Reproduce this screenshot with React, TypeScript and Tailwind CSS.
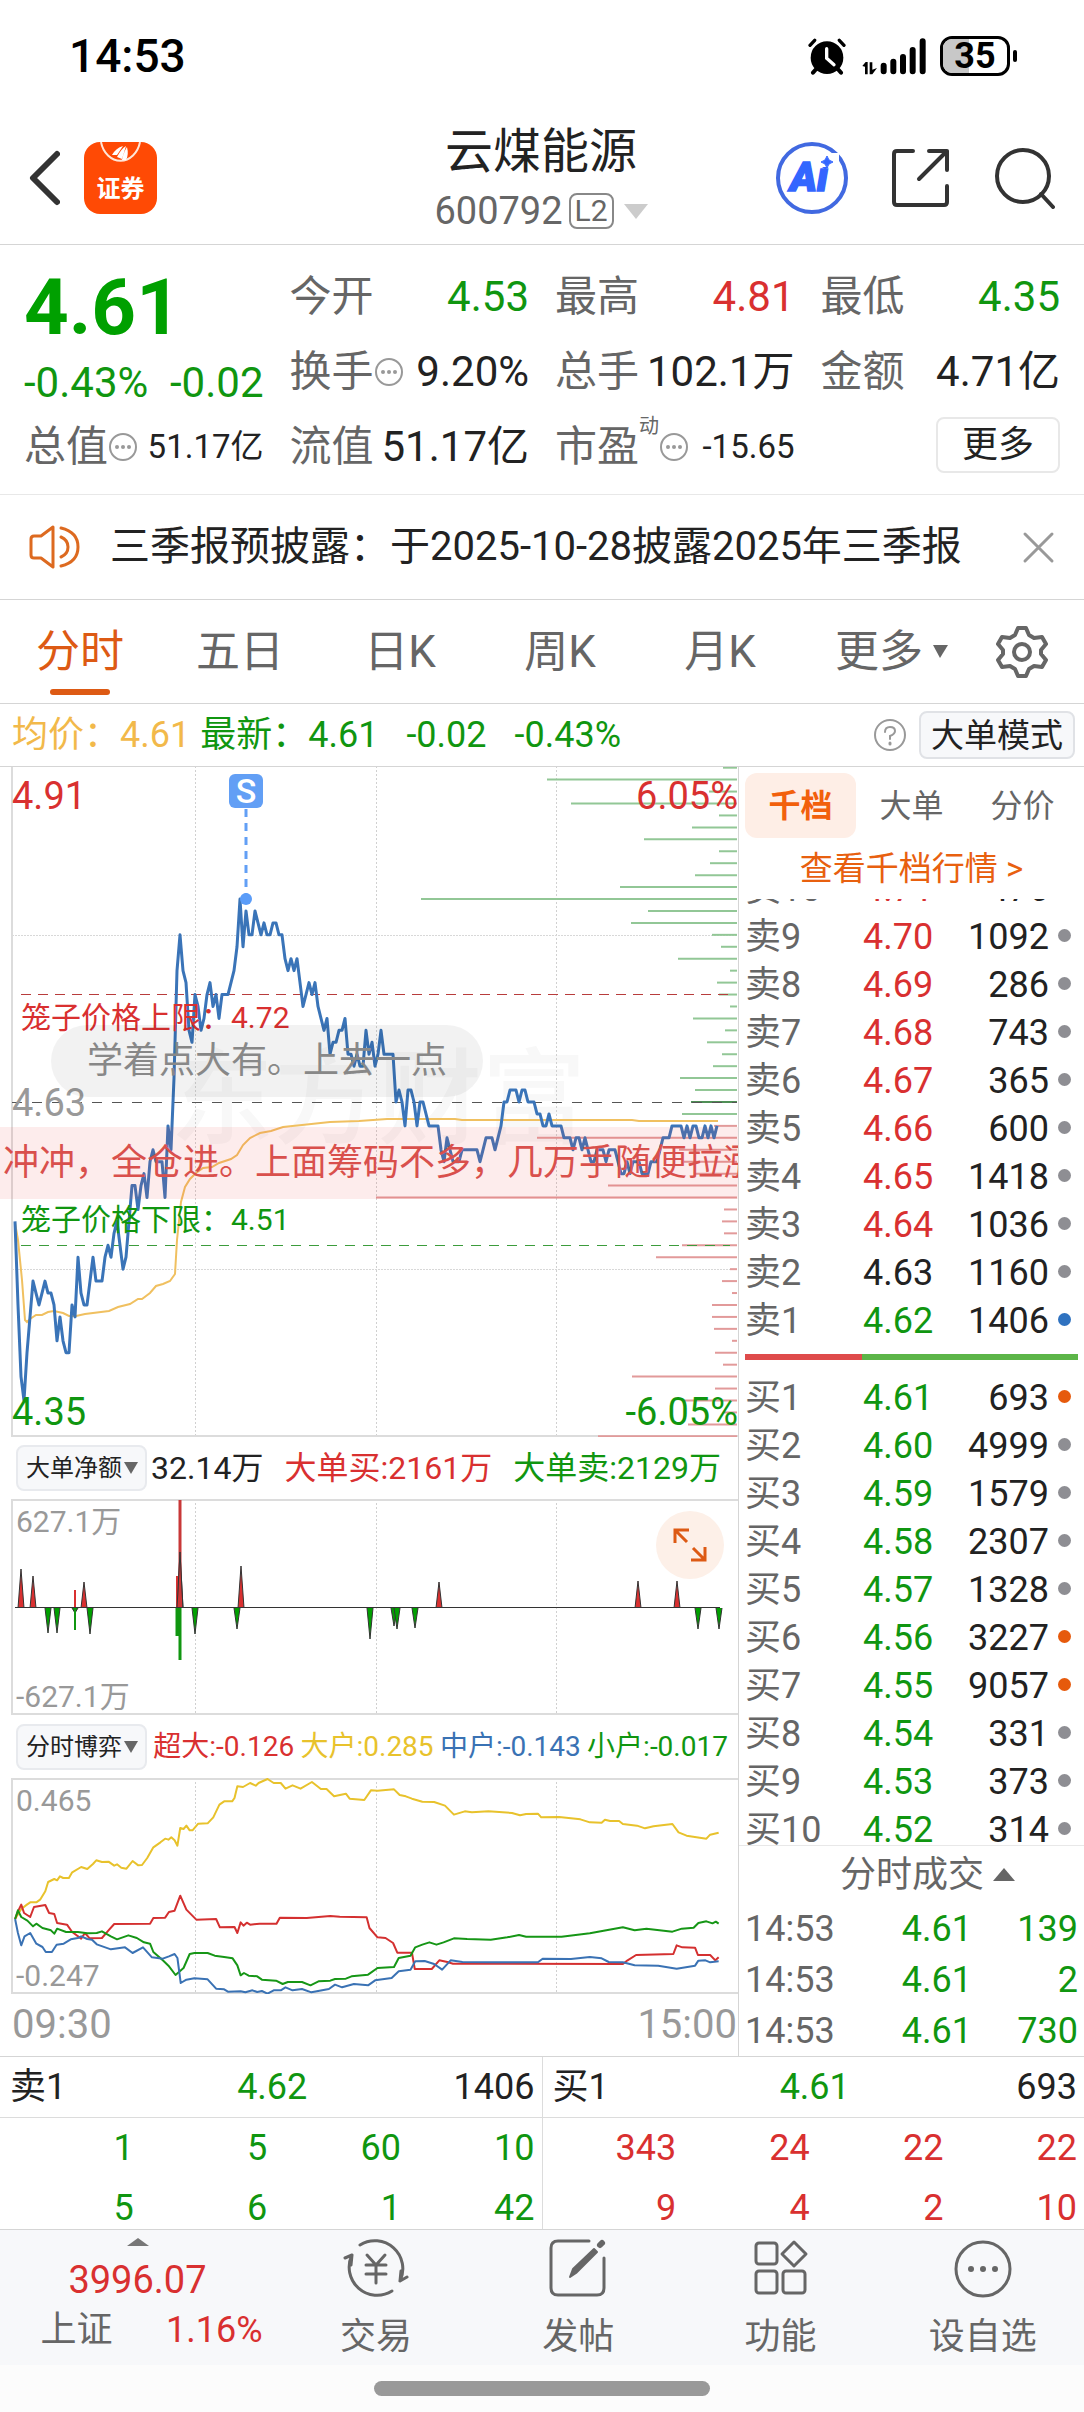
import { ReactNode } from "react";

// last price per minute, in cents
const prices = [
  453, 446, 440, 438, 442, 445, 448, 447, 446, 447, 448, 447, 447, 446, 443, 445, 443, 442, 442, 446,
  445, 450, 447, 446, 446, 448, 450, 448, 448, 448, 450, 451, 450, 452, 453, 451, 449, 450, 453, 456,
  456, 454, 456, 457, 455, 458, 459, 458, 458, 458, 455, 461, 459, 465, 474, 477, 474, 473, 469, 468,
  472, 471, 469, 470, 472, 473, 471, 472, 470, 472, 472, 472, 473, 474, 476, 480, 476, 479, 477, 477,
  479, 478, 477, 478, 477, 477, 478, 478, 477, 477, 475, 474, 475, 474, 475, 473, 471, 472, 473, 472,
  473, 471, 470, 469, 470, 467, 468, 468, 469, 469, 470, 467, 467, 466, 467, 466, 466, 469, 467, 468,
  466, 467, 469, 467, 467, 467, 467, 463, 464, 463, 461, 464, 464, 463, 461, 463, 463, 462, 461, 461,
  461, 461, 459, 458, 460, 459, 458, 458, 458, 459, 459, 459, 459, 459, 459, 458, 459, 460, 460, 460,
  459, 460, 461, 463, 463, 464, 464, 464, 463, 464, 464, 463, 463, 463, 462, 462, 461, 461, 462, 461,
  461, 461, 461, 460, 460, 460, 459, 460, 460, 459, 460, 459, 458, 458, 459, 459, 459, 458, 459, 459,
  459, 458, 457, 457, 458, 457, 458, 458, 458, 457, 457, 457, 458, 458, 458, 459, 460, 460, 460, 461,
  461, 461, 461, 460, 461, 460, 461, 461, 460, 460, 461, 460, 461, 460, 461,
];

const avgLine =
  "15,457 18,474 22,514 25,554 27,556 30,553 36,549 42,549 48,546 54,545 63,547 69,550 76,550 85,548 101,546 109,545 118,541 130,538 138,533 142,533 150,527 156,520 163,518 170,515 175,508 177,474 181,436 185,421 190,413 196,407 203,402 212,401 219,397 231,393 237,389 243,379 250,372 260,367 271,365 283,361 302,359 330,356 359,355 387,353 455,353 462,354 632,354 639,355 718,355";

// resting volume per price level, from 4.91 down to 4.35
const askBars = [14, 190, 28, 166, 18, 45, 93, 18, 27, 42, 117, 316, 89, 106, 25, 16, 59, 7, 20, 18, 7, 44, 12, 30, 15, 24, 57, 42, 46, 55];
const bidBars = [23, 200, 58, 53, 43, 129, 361, 13, 15, 13, 55, 81, 7, 15, 5, 25, 25, 23, 5, 22, 14, 105, 22, 53, 13, 49, 139];

const priceY = (cents: number) => 336 - (cents - 463) * 11.94;

const buySpikes = [[21, 70], [33, 77], [84, 83], [180, 53], [241, 67], [439, 83], [638, 82], [677, 82]];
const sellSpikes = [[48, 134], [57, 134], [75, 114], [90, 135], [195, 135], [237, 130], [370, 140], [394, 127], [397, 130], [415, 129], [698, 130], [719, 130]];

const gameLines = [
  {
    color: "#e8c22c",
    points:
      "32,598 45,568 57,555 64,548 77,548 85,540 96,515 102,487 115,478 121,482 127,470 134,475 146,475 153,458 172,442 185,448 197,433 204,422 216,427 230,426 242,438 248,434 257,444 268,447 281,424 293,437 301,436 312,415 325,383 340,368 350,357 357,360 363,353 370,362 376,378 382,325 389,328 395,318 402,332 408,332 420,312 440,311 452,293 465,255 475,245 492,245 497,235 503,200 515,202 530,190 542,198 548,190 567,178 580,190 595,190 605,207 620,197 637,207 661,187 680,208 692,208 708,230 733,222 741,237 772,241 786,212 800,213 835,209 847,226 860,230 873,237 895,246 920,247 943,258 962,285 985,275 1000,278 1035,275 1085,280 1102,287 1115,283 1140,282 1147,293 1185,292 1230,299 1250,308 1275,309 1282,300 1293,304 1312,304 1320,313 1350,318 1367,326 1385,320 1425,313 1438,338 1455,348 1497,357 1505,345 1523,339",
  },
  {
    color: "#d43030",
    points:
      "32,598 38,575 45,555 51,580 64,592 72,562 96,556 104,580 115,583 121,610 142,615 153,637 172,657 180,640 190,656 216,655 230,632 242,613 318,612 325,595 350,594 358,577 370,573 382,528 395,570 416,600 458,598 466,623 497,622 503,640 510,608 516,618 523,609 530,615 550,612 586,612 593,594 650,595 700,589 720,591 777,593 783,625 800,653 817,655 833,670 842,699 873,699 879,748 915,748 931,722 948,727 960,732 1320,733 1330,722 1348,706 1427,703 1434,677 1446,683 1473,684 1479,706 1505,706 1516,722 1523,713",
  },
  {
    color: "#169616",
    points:
      "32,598 38,572 45,592 58,603 70,620 77,612 90,625 108,632 115,642 121,627 140,637 165,637 185,641 205,640 216,635 235,650 248,659 272,647 290,655 305,668 318,672 325,697 345,722 357,738 372,766 389,745 402,703 412,700 440,700 455,708 475,712 493,716 503,737 510,767 517,760 527,768 545,770 555,780 585,783 599,793 610,787 640,787 658,797 675,785 700,783 710,778 733,777 745,770 780,765 800,745 835,742 845,715 870,708 880,683 895,675 910,668 925,675 940,668 962,656 990,658 1040,660 1075,653 1100,646 1115,651 1190,651 1250,641 1320,623 1345,632 1370,627 1425,636 1445,627 1470,624 1480,610 1497,605 1510,611 1517,606 1523,612",
  },
  {
    color: "#3a72b4",
    points:
      "32,598 38,640 45,677 52,650 64,640 77,672 90,682 97,697 110,697 120,675 135,672 150,659 165,655 172,650 185,658 195,660 205,674 235,689 265,683 281,700 303,683 322,713 345,717 358,710 370,703 376,715 383,790 395,780 412,776 440,779 458,807 475,809 483,816 510,815 520,818 535,812 545,817 555,814 567,822 580,812 595,812 605,803 620,812 640,808 660,818 697,808 710,795 725,803 750,793 780,797 795,782 830,775 845,755 870,750 880,725 900,724 920,733 937,750 955,722 980,727 1050,728 1140,728 1150,717 1210,718 1250,712 1275,716 1290,727 1320,728 1345,737 1395,738 1434,747 1473,738 1480,723 1495,722 1505,728 1523,725",
  },
];

const asks = [
  ["卖10", "4.71", "476"],
  ["卖9", "4.70", "1092"],
  ["卖8", "4.69", "286"],
  ["卖7", "4.68", "743"],
  ["卖6", "4.67", "365"],
  ["卖5", "4.66", "600"],
  ["卖4", "4.65", "1418"],
  ["卖3", "4.64", "1036"],
  ["卖2", "4.63", "1160"],
  ["卖1", "4.62", "1406"],
];

const bids = [
  ["买1", "4.61", "693"],
  ["买2", "4.60", "4999"],
  ["买3", "4.59", "1579"],
  ["买4", "4.58", "2307"],
  ["买5", "4.57", "1328"],
  ["买6", "4.56", "3227"],
  ["买7", "4.55", "9057"],
  ["买8", "4.54", "331"],
  ["买9", "4.53", "373"],
  ["买10", "4.52", "314"],
];

const trades = ["139", "2", "730"];

const priceColor = (p: string) =>
  p > "4.63" ? "text-[#d93030]" : p < "4.63" ? "text-[#109610]" : "text-[#222]";

const dotColor = (label: string) => {
  if (label === "卖1") return "bg-[#2f72c0]";
  if (["买1", "买6", "买7"].includes(label)) return "bg-[#e65a0c]";
  return "bg-[#8e8e93]";
};

const StatusBar = () => (
  <div className="flex h-28 items-center justify-between pl-[69px] pr-[67px] text-black">
    <span className="text-[46px] font-medium leading-none">14:53</span>
    <div className="flex items-center">
      <svg width="119" height="37" viewBox="110 38 357 111" aria-hidden="true">
        <circle cx="167" cy="97" r="49" />
        <g stroke="#000" strokeWidth="10" strokeLinecap="round" fill="none">
          <path d="M116 60 L130 45 M218 60 L204 45" />
          <path d="M140 125 L125 142 M194 125 L209 142" strokeWidth="12" />
          <path d="M166 70 V99 L188 118" stroke="#fff" />
        </g>
        <path d="M273 122 L283 110 H289 V147 H281 V124 Z M295 111 H303 V133 L317 128 L303 147 H295 Z" />
        <g stroke="#000" strokeWidth="18" strokeLinecap="round">
          <path d="M337 121 V138 M366 109 V138 M395 95 V138 M424 74 V138 M454 48 V138" />
        </g>
      </svg>
      <div className="relative ml-[13px] flex h-10 w-[70px] items-center justify-center overflow-hidden rounded-xl border-[3px] border-black">
        <div className="absolute inset-y-0 left-0 w-[26px] bg-[#c8c8c8]" />
        <span className="relative text-[36px] font-bold leading-none">35</span>
      </div>
      <div className="ml-[3px] h-3 w-1 rounded-full bg-black" />
    </div>
  </div>
);

const Header = () => (
  <header className="flex h-[133px] items-center justify-between border-b border-[#d5d5d5] pl-[27px] pr-[29px] text-[#333]">
    <div className="flex flex-1 items-center gap-6">
      <button aria-label="返回">
        <svg width="33" height="56" viewBox="0 0 33 56" fill="none" stroke="#333" strokeWidth="6" strokeLinecap="round" strokeLinejoin="round">
          <path d="M30 4 L6 28 L30 52" />
        </svg>
      </button>
      <button className="relative flex h-[72px] w-[73px] items-end justify-center overflow-hidden rounded-2xl bg-[#ff4a05] pb-[13px]" aria-label="证券">
        <svg className="absolute left-0 top-0" width="73" height="72" viewBox="0 0 73 72" fill="none" aria-hidden="true">
          <path d="M17 0 A 20 24 0 0 0 56 0" stroke="#ffe6d8" strokeWidth="2" />
          <path d="M28 13 Q32 6 39 4 L33 13 Z M33 15 Q37 7 42 4 L38 17 Z M38 18 Q40 9 43 5 Q45 13 42 18 Z" fill="#fff" />
        </svg>
        <span className="text-2xl font-bold leading-none text-white">证券</span>
      </button>
    </div>
    <div className="flex flex-col items-center gap-[14px]">
      <h1 className="text-[48px] leading-[52px] text-[#222]">云煤能源</h1>
      <button className="flex items-center gap-[6px] text-[38px] leading-[38px] text-[#666]">
        600792
        <span className="rounded-lg border-2 border-[#888] px-1 text-[30px] leading-8">L2</span>
        <svg className="ml-1" width="24" height="15" viewBox="0 0 24 15" fill="#ccc" aria-hidden="true">
          <path d="M0 0 H24 L12 15 Z" />
        </svg>
      </button>
    </div>
    <div className="flex flex-1 items-center justify-end gap-[42px]">
      <button aria-label="AI 助手">
        <svg width="74" height="74" viewBox="0 0 74 74">
          <circle cx="37" cy="37" r="34" fill="none" stroke="#4169e1" strokeWidth="4" />
          <text x="15" y="50" fontSize="41" fontWeight="900" fill="#3366ff" stroke="#3366ff" strokeWidth="1.5" fontStyle="italic">Ai</text>
          <rect x="44" y="12" width="20" height="14" fill="#fff" />
          <path d="M52 15 Q53 20 58 21 Q53 22 52 27 Q51 22 46 21 Q51 20 52 15 Z" fill="#3366ff" stroke="#3366ff" />
        </svg>
      </button>
      <button aria-label="分享">
        <svg width="60" height="60" viewBox="0 0 60 60" fill="none" stroke="#333" strokeWidth="4" strokeLinecap="round" strokeLinejoin="round">
          <path d="M22 3 H6 Q3 3 3 6 V54 Q3 57 6 57 H53 Q56 57 56 54 V38" />
          <path d="M38 3 H56 V22 M56 3 L28 31" />
        </svg>
      </button>
      <button aria-label="搜索">
        <svg width="62" height="62" viewBox="0 0 62 62" fill="none" stroke="#333" strokeWidth="4" strokeLinecap="round">
          <circle cx="30" cy="29" r="26" />
          <path d="M48 47 L60 60" />
        </svg>
      </button>
    </div>
  </header>
);

const InfoDots = () => (
  <svg width="30" height="30" viewBox="0 0 30 30" aria-hidden="true">
    <circle cx="15" cy="15" r="13" fill="none" stroke="#999" strokeWidth="2" />
    <g fill="#999">
      <circle cx="9" cy="15" r="2" />
      <circle cx="15" cy="15" r="2" />
      <circle cx="21" cy="15" r="2" />
    </g>
  </svg>
);

const Stat = ({ label, value, color = "text-[#222]", info, size = "text-[42px]" }: {
  label: ReactNode;
  value: string;
  color?: string;
  info?: boolean;
  size?: string;
}) => (
  <div className="flex h-[75px] items-center justify-between whitespace-nowrap leading-none">
    <span className="flex items-center text-[42px] text-[#666]">
      {label}
      {info && <InfoDots />}
    </span>
    <span className={`${size} ${color}`}>{value}</span>
  </div>
);

const Quote = () => (
  <section className="grid h-[250px] grid-cols-4 gap-x-[26px] border-b border-[#e8e8e8] px-6 pt-[14px]">
    <div>
      <p className="flex h-[98px] items-center text-[78px] font-bold leading-none text-[#00a000]">4.61</p>
      <p className="flex h-[52px] items-center justify-between text-[42px] leading-none text-[#109610]">
        <span>-0.43%</span>
        <span>-0.02</span>
      </p>
      <Stat label="总值" value="51.17亿" info size="text-[33px]" />
    </div>
    <div>
      <Stat label="今开" value="4.53" color="text-[#109610]" />
      <Stat label="换手" value="9.20%" info />
      <Stat label="流值" value="51.17亿" />
    </div>
    <div>
      <Stat label="最高" value="4.81" color="text-[#d93030]" />
      <Stat label="总手" value="102.1万" />
      <Stat
        label={<>市盈<sup className="self-start text-xl leading-none">动</sup></>}
        value="-15.65"
        info
        size="text-[33px]"
      />
    </div>
    <div>
      <Stat label="最低" value="4.35" color="text-[#109610]" />
      <Stat label="金额" value="4.71亿" />
      <div className="flex h-[72px] items-center justify-end">
        <button className="h-14 w-[124px] rounded-lg border-2 border-[#e8e8e8] text-[36px] leading-none text-[#222]">更多</button>
      </div>
    </div>
  </section>
);

const Notice = () => (
  <section className="flex h-[105px] items-center border-b border-[#d5d5d5] pl-[29px] pr-[29px]">
    <svg width="52" height="44" viewBox="0 0 52 44" fill="none" stroke="#dd6a20" strokeWidth="3" strokeLinecap="round" strokeLinejoin="round" aria-hidden="true">
      <path d="M24 2 L12 11 H5 Q2 11 2 14 V30 Q2 33 5 33 H12 L24 42 Z" />
      <path d="M32 12 Q39 15 39 22 Q39 29 32 32" />
      <path d="M32 3 Q49 7 49 22 Q49 37 32 41" />
    </svg>
    <p className="ml-[29px] flex-1 whitespace-nowrap text-[40px] leading-none text-[#222]">三季报预披露：于2025-10-28披露2025年三季报</p>
    <button aria-label="关闭">
      <svg width="33" height="33" viewBox="0 0 33 33" stroke="#999" strokeWidth="3" strokeLinecap="round">
        <path d="M3 3 L30 30 M30 3 L3 30" />
      </svg>
    </button>
  </section>
);

const Tabs = () => (
  <nav className="flex h-[104px] items-center border-b border-[#d5d5d5] text-[44px] leading-none text-[#666]">
    <div className="grid h-full flex-1 grid-cols-6">
      <button className="relative flex items-center justify-center text-[#dd5a14]">
        分时
        <span className="absolute bottom-2 h-[6px] w-[60px] rounded-full bg-[#dd5a14]" />
      </button>
      <button>五日</button>
      <button>日K</button>
      <button>周K</button>
      <button>月K</button>
      <button className="flex items-center justify-end gap-[10px] pr-3">
        更多
        <svg width="15" height="13" viewBox="0 0 15 13" fill="#666" aria-hidden="true">
          <path d="M0 0 H15 L7 13 Z" />
        </svg>
      </button>
    </div>
    <button className="flex w-[124px] justify-center" aria-label="设置">
      <svg width="52" height="52" viewBox="0 0 52 52" fill="none" stroke="#666" strokeWidth="4" strokeLinejoin="round">
        <path d="M22 2 H30 L33 9 L38 12 L46 11 L50 18 L45 24 V28 L50 34 L46 41 L38 40 L33 43 L30 50 H22 L19 43 L14 40 L6 41 L2 34 L7 28 V24 L2 18 L6 11 L14 12 L19 9 Z" />
        <circle cx="26" cy="26" r="8" />
      </svg>
    </button>
  </nav>
);

const SummaryRow = () => (
  <div className="flex h-[63px] items-center justify-between border-b border-[#d5d5d5] pl-3 pr-[9px] leading-none">
    <div className="flex items-center text-[36px] text-[#109610]">
      <span className="text-[#f2b94a]">均价：4.61</span>
      <span className="ml-[10px]">最新：4.61</span>
      <span className="ml-7">-0.02</span>
      <span className="ml-7">-0.43%</span>
    </div>
    <div className="flex items-center gap-3">
      <button aria-label="帮助">
        <svg width="34" height="34" viewBox="0 0 34 34" fill="none" stroke="#999" strokeWidth="2" strokeLinecap="round">
          <circle cx="17" cy="17" r="15" />
          <path d="M12 14 Q12 9 17 9 Q22 9 22 13 Q22 16 17 18 V21" />
          <path d="M17 25 V26" strokeWidth="3" />
        </svg>
      </button>
      <button className="h-12 w-[156px] rounded-lg border-2 border-[#e0e2e6] bg-[#f7f8fa] text-[33px] leading-none text-[#222]">大单模式</button>
    </div>
  </div>
);

const Grid = ({ height }: { height: number }) => (
  <g stroke="#d0d0d0" strokeDasharray="2 2">
    <path d={`M195.5 0 V${height} M376.5 0 V${height} M556.5 0 V${height}`} />
  </g>
);

const PriceChart = () => (
  <div className="relative h-[670px] overflow-hidden leading-none">
    <span className="absolute left-[170px] top-[282px] whitespace-nowrap text-[104px] font-medium text-[#f8f8f8]" aria-hidden="true">东方财富</span>
    <svg className="relative block h-full w-full" viewBox="0 1 738 670" preserveAspectRatio="none" fill="none">
      <Grid height={671} />
      <path d="M12 169.5 H738 M12 503.5 H738" stroke="#d8d8d8" strokeDasharray="2 1" />
      <path d="M12 0 V670 H738" stroke="#dcdcdc" strokeWidth="2" />
      {askBars.map((w, i) => (
        <path key={i} d={`M${737 - w} ${priceY(491 - i)} H737`} stroke={i === 28 ? "#4f8f56" : "#92c796"} strokeWidth="2" />
      ))}
      {bidBars.map((w, i) => (
        <path key={i} d={`M${737 - w} ${priceY(461 - i)} H737`} stroke="#e29a9a" strokeWidth="2" />
      ))}
      <path d="M21 228.5 H730" stroke="#b83c3c" strokeDasharray="10 7" />
      <path d="M21 479.5 H730" stroke="#3c9c3c" strokeDasharray="10 8" />
      <path d="M12 336.5 H737" stroke="#555" strokeDasharray="10 10" />
      <polyline points={avgLine} stroke="#f0c060" strokeWidth="2" />
      <polyline points={prices.map((p, i) => `${15 + i * 3},${priceY(p)}`).join(" ")} stroke="#3a74b8" strokeWidth="3" strokeLinejoin="round" />
      <path d="M246 43 V128" stroke="#629ff5" strokeWidth="3" strokeDasharray="8 6" />
      <circle cx="246" cy="133" r="6" fill="#5a9cf8" />
    </svg>
    <span className="absolute left-[229px] top-[7px] flex h-[34px] w-[34px] items-center justify-center rounded-md bg-[#629ff5] text-[34px] font-medium text-white">S</span>
    <span className="absolute left-3 top-[10px] text-[38px] text-[#d93030]">4.91</span>
    <span className="absolute right-0 top-[10px] text-[38px] text-[#d93030]">6.05%</span>
    <span className="absolute left-3 top-[317px] text-[38px] text-[#999]">4.63</span>
    <span className="absolute bottom-[6px] left-3 text-[38px] text-[#109610]">4.35</span>
    <span className="absolute bottom-[6px] right-0 text-[38px] text-[#109610]">-6.05%</span>
    <span className="absolute left-[21px] top-[236px] whitespace-nowrap text-[30px] text-[#d93030]">笼子价格上限：4.72</span>
    <span className="absolute left-[21px] top-[438px] whitespace-nowrap text-[30px] text-[#109610]">笼子价格下限：4.51</span>
    {/* bullet comments */}
    <p className="absolute left-[51px] top-[258px] flex h-[72px] items-center whitespace-nowrap rounded-full bg-black/5 px-[36px] text-[36px] text-[#888]">学着点大有。上去一点</p>
    <p className="absolute inset-x-0 top-[360px] flex h-[72px] items-center overflow-hidden whitespace-nowrap bg-[#f04040]/10 pl-[3px] text-[36px] text-[#d9504c]">冲冲，全仓进。上面筹码不多，几万手随便拉涨</p>
  </div>
);

const IndicatorSelect = ({ label }: { label: string }) => (
  <span className="relative flex items-center">
    <select aria-label="指标" className="h-[46px] w-[131px] appearance-none rounded-lg border-2 border-[#e8eaee] bg-[#f7f8fa] pl-2 text-2xl leading-none text-[#222]">
      <option>{label}</option>
    </select>
    <svg className="pointer-events-none absolute right-[9px]" width="14" height="12" viewBox="0 0 14 12" fill="#666" aria-hidden="true">
      <path d="M0 0 H14 L7 12 Z" />
    </svg>
  </span>
);

const FlowChart = () => (
  <div className="relative h-[216px] leading-none text-[#999]">
    <svg className="block h-full w-full" viewBox="0 0 738 216" preserveAspectRatio="none" fill="none">
      <Grid height={216} />
      <path d="M738 1 H12 V215 H738" stroke="#dcdcdc" strokeWidth="2" />
      {buySpikes.map(([x, y]) => (
        <path key={x} d={`M${x - 3} 109 L${x} ${y} L${x + 3} 109`} fill="#d93030" stroke="#333" />
      ))}
      {sellSpikes.map(([x, y]) => (
        <path key={x} d={`M${x - 3} 109 L${x} ${y} L${x + 3} 109`} fill="#00a000" stroke="#333" />
      ))}
      <path d="M75 91 V109 M177 77 V109" stroke="#d93030" strokeWidth="2" />
      <path d="M180 1 V109" stroke="#c83838" strokeWidth="3" />
      <path d="M75 109 V131" stroke="#109610" strokeWidth="2" />
      <path d="M177 109 V137 M180 109 V161" stroke="#109610" strokeWidth="3" />
      <path d="M15 108.5 H720" stroke="#333" />
      <path d="M177 109 L180 53 L183 109" stroke="#333" />
    </svg>
    <span className="absolute left-4 top-2 text-[30px]">627.1万</span>
    <span className="absolute bottom-[3px] left-4 text-[30px]">-627.1万</span>
    <button aria-label="展开" className="absolute right-[14px] top-[12px] flex h-[68px] w-[68px] items-center justify-center rounded-full bg-[#fdf0e8]">
      <svg width="34" height="34" viewBox="0 0 34 34" fill="none" stroke="#dd5a14" strokeWidth="3">
        <path d="M2 15 V2 H16 M2 2 L14 14 M20 20 L32 32 M32 19 V32 H18" />
      </svg>
    </button>
  </div>
);

const GameChart = () => (
  <div className="relative h-[216px] leading-none text-[#999]">
    <svg className="absolute inset-0 h-full w-full" viewBox="0 0 738 216" preserveAspectRatio="none" fill="none">
      <Grid height={216} />
      <path d="M738 1 H12 V215 H738" stroke="#dcdcdc" strokeWidth="2" />
    </svg>
    <svg className="absolute inset-0 h-full w-full" viewBox="0 175 1564 648" preserveAspectRatio="none" fill="none">
      {gameLines.map((l) => (
        <polyline key={l.color} points={l.points} stroke={l.color} strokeWidth="2" vectorEffect="non-scaling-stroke" strokeLinejoin="round" />
      ))}
    </svg>
    <span className="absolute left-4 top-2 text-[30px]">0.465</span>
    <span className="absolute bottom-[3px] left-4 text-[30px]">-0.247</span>
  </div>
);

const Charts = () => (
  <div className="min-w-0 flex-1">
    <PriceChart />
    <div className="flex h-[62px] items-center justify-between whitespace-nowrap pl-4 pr-[17px] text-[32px] leading-none">
      <span className="flex items-center gap-1 text-[#222]">
        <IndicatorSelect label="大单净额" />
        32.14万
      </span>
      <span className="text-[#d93030]">大单买:2161万</span>
      <span className="text-[#109610]">大单卖:2129万</span>
    </div>
    <FlowChart />
    <div className="flex h-[63px] items-center justify-between whitespace-nowrap pl-4 pr-[10px] text-[28px] leading-none">
      <IndicatorSelect label="分时博弈" />
      <span className="text-[#d93030]">超大:-0.126</span>
      <span className="text-[#e8c22c]">大户:0.285</span>
      <span className="text-[#3a72b4]">中户:-0.143</span>
      <span className="text-[#109610]">小户:-0.017</span>
    </div>
    <GameChart />
    <div className="flex h-[61px] items-center justify-between pl-3 pr-[1px] text-[40px] leading-none text-[#999]">
      <span>09:30</span>
      <span>15:00</span>
    </div>
  </div>
);

const BookTable = ({ rows }: { rows: string[][] }) => (
  <table className="w-full shrink-0 table-fixed text-[36px] leading-none">
    <tbody>
      {rows.map(([label, price, vol]) => (
        <tr key={label} className="h-12">
          <td className="w-[117px] p-0 pl-[6px] text-[#666]">{label}</td>
          <td className={`w-[80px] p-0 pl-[7px] ${priceColor(price)}`}>{price}</td>
          <td className="p-0 text-right text-[#222]">{vol}</td>
          <td className="w-[35px] p-0">
            <span className={`mb-1 ml-[9px] block h-[13px] w-[13px] rounded-full ${dotColor(label)}`} />
          </td>
        </tr>
      ))}
    </tbody>
  </table>
);

const OrderBook = () => (
  <aside className="w-[346px] border-l border-[#d5d5d5] pt-[6px] leading-none">
    <div className="flex h-[65px] pl-[6px] pr-[6px] text-[32px] text-[#666]">
      <button className="flex-1 rounded-xl bg-[#feeee6] font-bold text-[#f2600c]">千档</button>
      <button className="flex-1">大单</button>
      <button className="flex-1">分价</button>
    </div>
    <a href="#levels" className="flex h-[61px] items-center justify-center text-[33px] text-[#e8600f]">查看千档行情 &gt;</a>
    <div className="flex h-[446px] flex-col justify-end overflow-hidden">
      <BookTable rows={asks} />
    </div>
    <div className="mb-[14px] ml-[6px] mr-[6px] mt-[9px] flex h-[6px]">
      <div className="w-[35%] bg-[#df4b4b]" />
      <div className="flex-1 bg-[#5cb548]" />
    </div>
    <div className="h-[471px] overflow-hidden">
      <BookTable rows={bids} />
    </div>
    <button className="flex h-[58px] w-full items-center justify-center gap-[9px] border-t border-[#e8e8e8] pl-8 text-[36px] text-[#666]">
      分时成交
      <svg width="22" height="13" viewBox="0 0 22 13" fill="#666" aria-hidden="true">
        <path d="M0 13 L11 0 L22 13 Z" />
      </svg>
    </button>
    <table className="w-full table-fixed text-[36px]">
      <tbody>
        {trades.map((vol) => (
          <tr key={vol} className="h-[51px] text-[#109610]">
            <td className="p-0 pl-[6px] text-[#666]">14:53</td>
            <td className="w-[117px] p-0 text-right">4.61</td>
            <td className="w-[112px] p-0 pr-[6px] text-right">{vol}</td>
          </tr>
        ))}
      </tbody>
    </table>
  </aside>
);

const QueueSide = ({ label, price, vol, rows, color }: {
  label: string;
  price: string;
  vol: string;
  rows: number[][];
  color: string;
}) => (
  <div className="flex-1">
    <div className="grid h-[61px] grid-cols-3 items-center border-b border-[#dcdcdc] pl-[10px] pr-[7px] text-[#222]">
      <span>{label}</span>
      <span className="text-center text-[#109610]">{price}</span>
      <span className="text-right">{vol}</span>
    </div>
    <div className="pr-[7px]">
      <table className={`w-full table-fixed ${color}`}>
        <tbody>
          {rows.map((row, i) => (
            <tr key={i} className="h-[60px]">
              {row.map((n, j) => (
                <td key={j} className="p-0 text-right">{n}</td>
              ))}
            </tr>
          ))}
        </tbody>
      </table>
    </div>
  </div>
);

const Queue = () => (
  <section className="flex h-[174px] overflow-hidden border-y border-[#d5d5d5] text-[36px] leading-none">
    <QueueSide label="卖1" price="4.62" vol="1406" color="text-[#109610]" rows={[[1, 5, 60, 10], [5, 6, 1, 42]]} />
    <div className="w-px bg-[#dcdcdc]" />
    <QueueSide label="买1" price="4.61" vol="693" color="text-[#d93030]" rows={[[343, 24, 22, 22], [9, 4, 2, 10]]} />
  </section>
);

const NavItem = ({ label, children }: { label: string; children: ReactNode }) => (
  <button className="flex flex-1 flex-col items-center gap-[18px] pt-2 text-[36px] leading-[42px]">
    <svg width="66" height="60" viewBox="0 0 66 60" fill="none" stroke="#666" strokeWidth="3" strokeLinecap="round" strokeLinejoin="round" aria-hidden="true">
      {children}
    </svg>
    {label}
  </button>
);

const BottomNav = () => (
  <nav className="flex h-[135px] bg-[#f7f8fa] text-[#666]">
    <button className="flex w-[275px] flex-col items-center pt-2 leading-none">
      <svg width="22" height="8" viewBox="0 0 22 8" fill="#777" aria-hidden="true">
        <path d="M0 8 L11 0 L22 8 Z" />
      </svg>
      <span className="mt-[15px] text-[38px] text-[#d93030]">3996.07</span>
      <span className="ml-7 mt-[13px] flex w-[222px] items-center justify-between text-[36px]">
        上证
        <span className="text-[#d93030]">1.16%</span>
      </span>
    </button>
    <NavItem label="交易">
      <path d="M17 7 A28 28 0 0 1 57 43 M57 43 L64 39 M57 43 L58 33" />
      <path d="M49 53 A28 28 0 0 1 9 17 M9 17 L2 20 M9 17 L8 27" />
      <path d="M24 17 L33 27 L42 17 M33 27 V45 M23 27 H43 M23 36 H43" />
    </NavItem>
    <NavItem label="发帖">
      <path d="M44 3 H13 Q6 3 6 10 V50 Q6 57 13 57 H52 Q59 57 59 50 V20" />
      <path d="M25 39 L28 31 L49 11 L52 14 L31 35 Z" fill="#666" strokeWidth="2" />
      <path d="M55 7 L57 5" strokeWidth="6" />
    </NavItem>
    <NavItem label="功能">
      <rect x="8" y="5" width="21" height="21" rx="3" />
      <rect x="8" y="33" width="21" height="22" rx="3" />
      <rect x="35" y="33" width="22" height="22" rx="3" />
      <path d="M46 4 L58 16 L46 28 L34 16 Z" />
    </NavItem>
    <NavItem label="设自选">
      <circle cx="33" cy="31" r="27" />
      <g fill="#666" stroke="none">
        <circle cx="21" cy="31" r="3" />
        <circle cx="33" cy="31" r="3" />
        <circle cx="45" cy="31" r="3" />
      </g>
    </NavItem>
  </nav>
);

export default function App() {
  return (
    <div className="min-h-screen bg-white font-['Roboto','Noto_Sans_CJK_SC',sans-serif]">
      <StatusBar />
      <Header />
      <Quote />
      <Notice />
      <Tabs />
      <SummaryRow />
      <main className="flex">
        <Charts />
        <OrderBook />
      </main>
      <Queue />
      <BottomNav />
      <div className="flex h-[47px] items-center justify-center bg-[#fcfcfc]">
        <div className="h-[15px] w-[31%] rounded-full bg-[#999]" />
      </div>
    </div>
  );
}
